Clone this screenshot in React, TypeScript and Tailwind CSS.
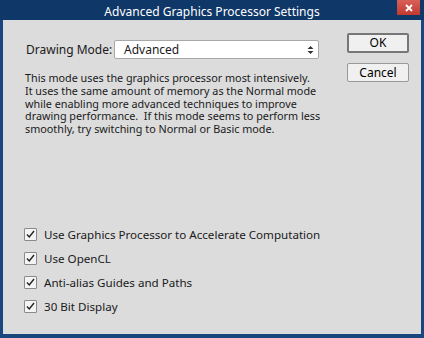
import React from 'react';

const options = [
  'Use Graphics Processor to Accelerate Computation',
  'Use OpenCL',
  'Anti-alias Guides and Paths',
  '30 Bit Display',
];

function CheckRow({ label }: { label: string }) {
  return (
    <div className="flex items-center h-[24px]">
      <div className="w-[13px] h-[13px] border border-[#8a8a8a] bg-[#f4f4f4] rounded-[1px] flex items-center justify-center">
        <svg width="11" height="11" viewBox="0 0 11 11">
          <path d="M2 5.5 L4.3 8 L9 2" fill="none" stroke="#222" strokeWidth="1.4" />
        </svg>
      </div>
      <span className="ml-[7px] text-[11.6px] text-[#1a1a1a]">{label}</span>
    </div>
  );
}

export default function App() {
  return (
    <div
      className="w-[424px] h-[338px] bg-[#18477d] flex flex-col"
      style={{ fontFamily: '"Noto Sans", "Open Sans", sans-serif' }}
    >
      {/* title bar */}
      <div className="relative h-[20px] bg-[#0f3768] flex items-center justify-center pt-[3px]">
        <span className="text-white text-[12px] leading-none">Advanced Graphics Processor Settings</span>
        <div className="absolute right-[4px] top-0 w-[23px] h-[15px] bg-gradient-to-b from-[#d9605a] to-[#c0392f] flex items-center justify-center">
          <svg width="8" height="8" viewBox="0 0 8 8">
            <path d="M1 1 L7 7 M7 1 L1 7" stroke="#fff" strokeWidth="1.8" />
          </svg>
        </div>
      </div>

      {/* client area */}
      <div className="flex-1 ml-[3px] mr-[3px] mb-[4px] bg-[#dcdcdc] flex">
        <div className="flex-1 pl-[21px] pt-[20px] flex flex-col">
          <div className="flex items-center h-[19px] pl-[2px]">
            <span className="text-[12px] text-[#1a1a1a] w-[88px]">Drawing Mode:</span>
            <div className="w-[205px] h-[19px] bg-white border border-[#a8a8a8] rounded-[2px] flex items-center justify-between pl-[9px] pr-[4px]">
              <span className="text-[12px] text-[#1a1a1a]">Advanced</span>
              <svg width="7" height="10" viewBox="0 0 7 10">
                <path d="M0.5 4 L3.5 1 L6.5 4 Z M0.5 6 L3.5 9 L6.5 6 Z" fill="#333" />
              </svg>
            </div>
          </div>
          <p className="mt-[13px] pl-[1px] text-[10.8px] leading-[12.75px] text-[#1a1a1a] whitespace-nowrap">
            This mode uses the graphics processor most intensively.
            <br />
            It uses the same amount of memory as the Normal mode
            <br />
            while enabling more advanced techniques to improve
            <br />
            drawing performance.&nbsp; If this mode seems to perform less
            <br />
            smoothly, try switching to Normal or Basic mode.
          </p>
          <div className="mt-[87px] flex flex-col">
            {options.map((o) => (
              <CheckRow key={o} label={o} />
            ))}
          </div>
        </div>
        <div className="w-[74px] pt-[13px] flex flex-col">
          <button className="w-[62px] h-[20px] bg-[#f0f0f0] border-2 border-[#777] rounded-[2px] text-[12px] text-black leading-none">
            OK
          </button>
          <button className="mt-[10px] w-[62px] h-[19px] bg-[#f0f0f0] border border-[#999] rounded-[2px] text-[12px] text-black leading-none">
            Cancel
          </button>
        </div>
      </div>
    </div>
  );
}
